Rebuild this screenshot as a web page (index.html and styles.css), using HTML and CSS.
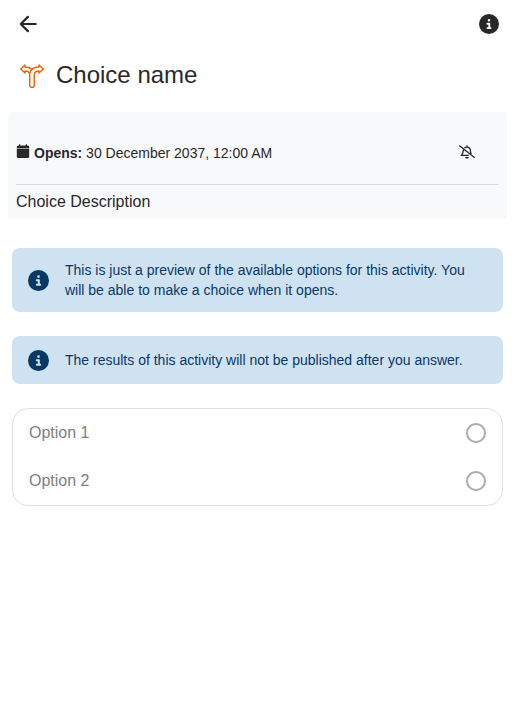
FILE: index.html
```html
<!DOCTYPE html>
<html lang="en">
<head>
<meta charset="utf-8">
<title>Choice name</title>
<link rel="stylesheet" href="styles.css">
</head>
<body>
<svg class="defs" aria-hidden="true">
  <symbol id="info" viewBox="0 0 512 512"><path d="M256 512A256 256 0 1 0 256 0a256 256 0 1 0 0 512zM216 336h24V272H216c-13.3 0-24-10.7-24-24s10.7-24 24-24h48c13.3 0 24 10.7 24 24v88h8c13.3 0 24 10.7 24 24s-10.7 24-24 24H216c-13.3 0-24-10.7-24-24s10.7-24 24-24zm40-208a32 32 0 1 1 0 64 32 32 0 1 1 0-64z"/></symbol>
</svg>
<header class="toolbar">
  <svg class="icon back" viewBox="0 0 20 20"><path d="M9.900 2.900 2.800 10l7.100 7.100M3 10h14.800"/></svg>
  <svg class="icon"><use href="#info"/></svg>
</header>
<main>
  <div class="title">
    <svg class="module-icon" viewBox="0 0 24 24"><path d="M12 5.500C10.200 3.700 8 3 5 3V.9L.7 5 5 9.100V7C8 7 9.700 8.300 9.700 11v10.200a2.300 2.300 0 0 0 4.600 0V11c0-2.700 1.700-4 4.700-4v2.100L23.300 5 19 .9V3C13.500 3 10.500 5.600 9.800 9.300"/></svg>
    <h1>Choice name</h1>
  </div>
  <section class="summary">
    <div class="dates">
      <svg class="calendar" viewBox="0 0 14 15"><path d="M.8 4V3Q.8 1.500 2.300 1.500H3V.2h1.200v1.300h5.600V.2H11v1.300h.7q1.500 0 1.500 1.500v1zM.8 5h12.400v7.500q0 1.500-1.500 1.500H2.300Q.8 14 .8 12.500z"/><path class="band" d="M.8 4h12.400v1H.8z"/></svg>
      <p><strong>Opens:</strong> 30 December 2037, 12:00 AM</p>
      <svg class="bell" viewBox="0 0 18 16"><path d="M5.600 5.500C4.900 7 5.400 9.400 3.600 11.300h7.200M6.500 4C7.500 2.700 10.900 2.500 12 4.800c.8 1.600 0 3.600 1.400 5.500M9 1.300v1.500M1.300 1.600l15.400 12.200"/><path class="clapper" d="M7 13h4q-.4 1.800-2 1.800T7 13z"/></svg>
    </div>
    <p class="description">Choice Description</p>
  </section>
  <div class="notice">
    <svg class="notice-icon"><use href="#info"/></svg>
    <p>This is just a preview of the available options for this activity. You will be able to make a choice when it opens.</p>
  </div>
  <div class="notice">
    <svg class="notice-icon"><use href="#info"/></svg>
    <p>The results of this activity will not be published after you answer.</p>
  </div>
  <div class="options">
    <div class="option"><span>Option 1</span><i class="radio"></i></div>
    <div class="option"><span>Option 2</span><i class="radio"></i></div>
  </div>
</main>
</body>
</html>
```
FILE: styles.css
```css
* { box-sizing: border-box; }
body { margin: 0; background: #fff; color: #282828; font-family: "Liberation Sans", Arial, sans-serif; }
h1, p { margin: 0; }
svg { display: block; flex: none; fill: currentColor; }
.defs { position: absolute; width: 0; height: 0; }
.toolbar { height: 48px; padding: 0 16px 0 18px; display: flex; align-items: center; justify-content: space-between; }
.icon { width: 20px; height: 20px; }
.back { fill: none; stroke: currentColor; stroke-width: 2.2; stroke-linecap: round; stroke-linejoin: round; }
.title { height: 64px; padding: 16px 20px 0; display: flex; align-items: flex-start; gap: 12px; }
.title h1 { font-size: 24px; font-weight: 400; line-height: 22px; }
.module-icon { width: 24px; height: 24px; fill: none; stroke: #eb6200; stroke-width: 1.4; stroke-linejoin: round; stroke-linecap: round; }
.summary { height: 107px; margin: 0 8px; padding: 0 8px; background: #f8f9fb; border-radius: 4px; }
.dates { height: 73px; padding: 9px 23px 0 0; display: flex; align-items: center; border-bottom: 1px solid #dbdce3; font-size: 14px; line-height: 20px; }
.calendar { width: 14px; height: 15px; margin: -3px 4px 0 0; }
.band { fill: #999; }
.bell { width: 18px; height: 16px; margin: -2px 0 0 auto; fill: none; stroke: currentColor; stroke-width: 1.3; }
.clapper { fill: currentColor; stroke: none; }
.description { padding-top: 5px; font-size: 16px; line-height: 24px; }
.notice { min-height: 48px; margin: 0 12px 24px; padding: 12px 16px; display: flex; align-items: center; gap: 16px; background: #cfe2f2; color: #093865; border-radius: 8px; font-size: 14px; line-height: 20px; }
.summary + .notice { margin-top: 29px; }
.notice-icon { width: 21px; height: 21px; }
.options { height: 98px; margin: 0 12px; border: 1px solid #dfe0e6; border-radius: 16px; }
.option { height: 48px; padding: 0 16px; display: flex; align-items: center; justify-content: space-between; color: #7e7e7e; font-size: 16px; }
.radio { width: 20px; height: 20px; border: 2px solid #aaa; border-radius: 50%; }
```
